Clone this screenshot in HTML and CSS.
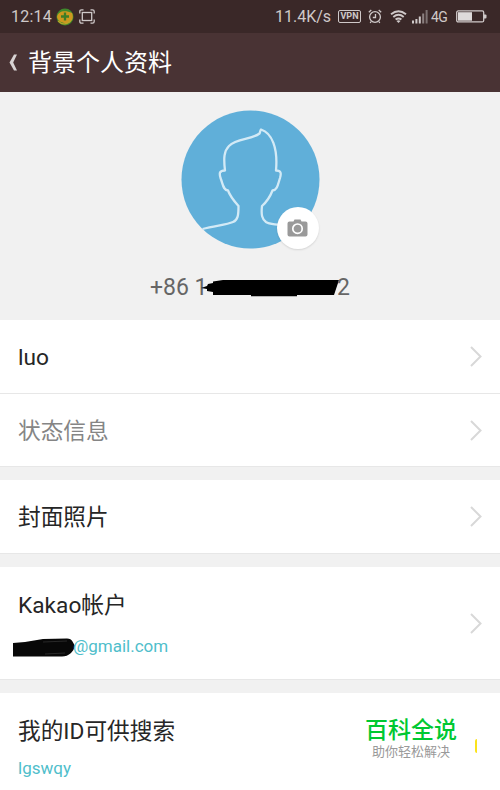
FILE: index.html
```html
<!DOCTYPE html>
<html lang="zh-CN">
<head>
  <meta charset="UTF-8">
  <meta name="viewport" content="width=device-width, initial-scale=1.0">
  <title>背景个人资料</title>
  <link rel="stylesheet" href="styles.css">
</head>
<body>
  <div class="status-bar">
    <span class="clock">12:14</span>
    <svg class="app-icon" width="18" height="18" viewBox="0 0 18 18">
      <circle cx="9" cy="9" r="8.5" fill="#3f8a2c"/>
      <path d="M1 9C2 3 9 2 16 5c2 5 0 8-3 10C8 16 2 14 1 9z" fill="#cd981f"/>
      <path d="M2 13c4 4 9 4 13-1" fill="none" stroke="#b9a428" stroke-width="1.300"/>
      <path d="M9 4.500v8M5 8.500h8" stroke="#3c7d26" stroke-width="2.300"/>
    </svg>
    <svg class="shot-icon" width="16" height="15" viewBox="0 0 16 15" fill="none" stroke="#cfc9c9" stroke-width="1.300">
      <path d="M.8 4.500V2.500q0-1.700 1.700-1.700h2M11.500.8h2q1.700 0 1.700 1.700v2M15.200 10.500v2q0 1.700-1.700 1.700h-2M4.500 14.200h-2q-1.700 0-1.700-1.700v-2"/>
      <rect x="3.300" y="3.500" width="9.400" height="8"/>
    </svg>
    <span class="speed">11.4K/s</span>
    <span class="vpn">VPN</span>
    <svg class="alarm-icon" width="14" height="15" viewBox="0 0 14 15" fill="none" stroke="#cfc9c9" stroke-width="1.300">
      <circle cx="7" cy="8" r="5.400"/>
      <path d="M7.500 5v3.500H4.800M.8 3.200L3.300 1M13.200 3.200L10.700 1M3.200 12.500l-1 1.500M10.800 12.500l1 1.500"/>
    </svg>
    <svg class="wifi-icon" width="17" height="13" viewBox="0 0 17 13" fill="none" stroke="#cfc9c9" stroke-width="1.900">
      <path d="M1 4.300q7.500-6.300 15 0M3.300 7q5.200-4.300 10.400 0M5.600 9.600q2.900-2.400 5.800 0"/>
      <path d="M8.500 13l-2-2q2-1.300 4 0z" fill="#cfc9c9" stroke="none"/>
    </svg>
    <svg class="signal-icon" width="16" height="14" viewBox="0 0 16 14" fill="#cfc9c9">
      <rect x="0" y="10.500" width="2" height="3"/>
      <rect x="3.400" y="9" width="2" height="4.500"/>
      <rect x="6.800" y="6.500" width="2" height="7"/>
      <rect x="10.200" y="3.500" width="2" height="10" opacity=".55"/>
      <rect x="13.600" y="0" width="2" height="13.500" opacity=".45"/>
    </svg>
    <span class="network">4G</span>
    <svg class="battery-icon" width="31" height="13" viewBox="0 0 31 13">
      <rect x=".7" y=".9" width="27" height="11" rx="1.500" fill="none" stroke="#cfc9c9" stroke-width="1.300"/>
      <rect x="2" y="2.200" width="14" height="8.500" fill="#dedada"/>
      <path d="M28 4.500h1.500q1 0 1 1v2q0 1-1 1H28z" fill="#cfc9c9"/>
    </svg>
  </div>

  <header class="title-bar">
    <svg class="back" width="8" height="17" viewBox="0 0 8 17">
      <path d="M8 .5H5L.5 8.500 5 16.500h3L4.200 8.500z" fill="#d8d3d3"/>
    </svg>
    <h1>背景个人资料</h1>
  </header>

  <section class="profile">
    <div class="avatar">
      <svg width="139" height="139" viewBox="0 0 139 139">
        <circle cx="69.500" cy="69.500" r="69" fill="#60afd9"/>
        <path d="M21.500 119C34 115.500 45 115 52 112C57 110 57.500 105 57.500 96C53 91 49 86 47 80.500C42 80 42 74 39.500 68C38 63 38.500 60.500 44 60.500C42.500 48 43 41 48 36C56 28 70 30 78.500 23.500C79.500 22 79 20 80 19.500C91 23 97 38 95 60.500C100 60.500 100.500 63 99 68C97 74 96.500 80 91.500 80.500C89 87 86 91.500 81 96C80 105 81 109 85 112C88 114 92 114 98 115" fill="none" stroke="#d3eaf6" stroke-width="2.300" stroke-linejoin="round"/>
      </svg>
      <span class="camera">
        <svg width="21" height="18" viewBox="0 0 21 18">
          <path d="M6.500 2.500L7.500.5h6l1 2H18.500q2 0 2 2v11q0 2-2 2h-16q-2 0-2-2v-11q0-2 2-2z" fill="#999"/>
          <circle cx="10.500" cy="9.700" r="4.700" fill="none" stroke="#fff" stroke-width="1.700"/>
        </svg>
      </span>
    </div>
    <div class="phone">
      <span>+86 1</span>
      <svg class="phone-mask" width="139" height="20" viewBox="0 0 139 20">
        <path d="M0 10l6-2 1-2 5-1V3.500L22 2h116l-5 15H96v1.200H50V17H12v-3l-6-1v-2z" fill="#000"/>
      </svg>
      <span>2</span>
    </div>
  </section>

  <main class="settings">
    <div class="group">
      <div class="row">
        <div class="label">luo</div>
        <svg class="arrow" width="12" height="21" viewBox="0 0 12 21"><path d="M1 1l9.500 9.500L1 20"/></svg>
      </div>
      <div class="row">
        <div class="label muted">状态信息</div>
        <svg class="arrow" width="12" height="21" viewBox="0 0 12 21"><path d="M1 1l9.500 9.500L1 20"/></svg>
      </div>
    </div>

    <div class="group">
      <div class="row">
        <div class="label">封面照片</div>
        <svg class="arrow" width="12" height="21" viewBox="0 0 12 21"><path d="M1 1l9.500 9.500L1 20"/></svg>
      </div>
    </div>

    <div class="group">
      <div class="row tall">
        <div class="info">
          <div class="label">Kakao帐户</div>
          <div class="value email">
            <svg width="63" height="20" viewBox="0 0 63 20">
              <path d="M0 5l12-1 18-3 24-.5q4 0 5.500 3L62 8q-1 4-4 7-4 3.500-9 3.500H0z" fill="#080808"/>
              <path d="M30 4l24-1M32 16l20-1" stroke="#292929" stroke-width="1.200"/>
            </svg>
            <span>@gmail.com</span>
          </div>
        </div>
        <svg class="arrow" width="12" height="21" viewBox="0 0 12 21"><path d="M1 1l9.500 9.500L1 20"/></svg>
      </div>
    </div>

    <div class="group">
      <div class="row search-row">
        <div class="info">
          <div class="label">我的ID可供搜索</div>
          <div class="value">lgswqy</div>
        </div>
        <div class="brand">
          <div class="brand-name">百科全说</div>
          <div class="brand-slogan">助你轻松解决</div>
        </div>
        <span class="toggle-edge"></span>
      </div>
    </div>
  </main>
</body>
</html>
```
FILE: styles.css
```css
:root {
  --status-color: #3a2828;
  --title-color: #493334;
  --page-color: #f1f1f1;
  --line-color: #e7e7e7;
  --text-color: #262626;
  --link-color: #4fbecb;
}

* {
  margin: 0;
  padding: 0;
  box-sizing: border-box;
}

html, body {
  height: 790px;
  overflow: hidden;
}

body {
  background-color: var(--page-color);
  color: var(--text-color);
  font-family: Roboto, 'Noto Sans CJK SC', sans-serif;
}

svg {
  display: block;
  flex: none;
}

.status-bar {
  display: flex;
  align-items: center;
  height: 33px;
  padding-left: 11px;
  background-color: var(--status-color);
  color: #cfc9c9;
  font-size: 16px;
  white-space: nowrap;
}

.clock {
  width: 45px;
  letter-spacing: 0.2px;
}

.shot-icon {
  margin-left: 5px;
}

.speed {
  width: 63px;
  margin-left: 180px;
}

.vpn {
  width: 23px;
  height: 13px;
  border: 1.5px solid #cfc9c9;
  border-radius: 2px;
  font-size: 9px;
  font-weight: 700;
  line-height: 11px;
  text-align: center;
}

.alarm-icon {
  margin-left: 7px;
}

.wifi-icon {
  margin-left: 8px;
}

.signal-icon {
  margin-left: 5px;
}

.network {
  width: 25px;
  margin-left: 3px;
  font-size: 14px;
  letter-spacing: -0.5px;
}

.title-bar {
  display: flex;
  align-items: center;
  height: 59px;
  padding-left: 9px;
  background-color: var(--title-color);
}

.title-bar h1 {
  margin-left: 11px;
  color: #fff;
  font-size: 24px;
  font-weight: 400;
  line-height: 36px;
}

.profile {
  display: flex;
  flex-direction: column;
  align-items: center;
  height: 228px;
  padding-top: 18px;
}

.avatar {
  position: relative;
}

.camera {
  position: absolute;
  right: 1px;
  bottom: 0;
  display: flex;
  align-items: center;
  justify-content: center;
  width: 42px;
  height: 42px;
  border-radius: 50%;
  background-color: #fff;
  box-shadow: 0 1px 2px rgba(0, 0, 0, 0.12);
}

.phone {
  display: flex;
  align-items: center;
  justify-content: space-between;
  width: 200px;
  margin-top: 25px;
  color: #666;
  font-size: 23px;
  line-height: 28px;
  white-space: nowrap;
}

.phone-mask {
  margin: 0 -4px 0 -7px;
}

.group {
  margin-bottom: 13px;
  border-bottom: 1px solid var(--line-color);
  background-color: #fff;
}

.row {
  display: flex;
  align-items: center;
  justify-content: space-between;
  height: 73px;
  padding: 0 18px;
}

.row + .row {
  border-top: 1px solid var(--line-color);
}

.tall {
  height: 112px;
}

.search-row {
  align-items: flex-start;
  height: 112px;
  padding-top: 20px;
}

.label {
  padding-top: 3px;
  font-size: 22.7px;
  line-height: 34px;
}

.muted {
  color: #858585;
}

.tall .label {
  margin-top: -2px;
}

.value {
  margin-top: 11px;
  color: var(--link-color);
  font-size: 17px;
  line-height: 24px;
}

.search-row .label {
  padding-top: 2px;
}

.search-row .value {
  margin-top: 7px;
}

.email {
  display: flex;
  align-items: center;
  margin-left: -5px;
}

.email svg {
  margin-top: 3px;
}

.email span {
  margin-left: -3px;
}

.arrow path {
  fill: none;
  stroke: #d8d8d8;
  stroke-width: 2;
}

.brand {
  margin: 6px 18px 0 auto;
  text-align: center;
}

.brand-name {
  color: #00c832;
  font-size: 23px;
  font-weight: 500;
  line-height: 24px;
}

.brand-slogan {
  color: #999;
  font-size: 13px;
  line-height: 18px;
}

.toggle-edge {
  width: 2px;
  height: 14px;
  margin: 26px 5px 0 0;
  border-radius: 2px 0 0 2px;
  background-color: #fbe31c;
}
```
